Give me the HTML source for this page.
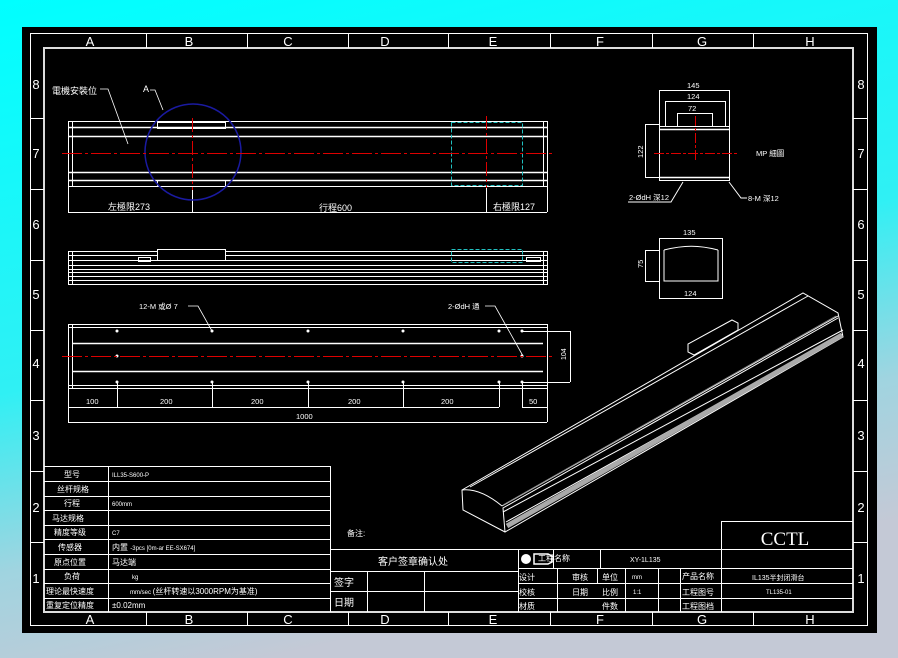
<!DOCTYPE html>
<html><head><meta charset="utf-8"><style>
html,body{margin:0;padding:0;width:898px;height:658px;overflow:hidden;}
svg{display:block;}
text{font-family:"Liberation Sans","Noto Sans CJK SC",sans-serif;fill:#fff;}
text.serif{font-family:"Liberation Serif",serif;}
</style></head><body>
<svg width="898" height="658" viewBox="0 0 898 658" xmlns="http://www.w3.org/2000/svg">
<defs>
<linearGradient id="bg" x1="0" y1="0" x2="0.3" y2="1">
<stop offset="0" stop-color="#00ffff"/><stop offset="0.55" stop-color="#30f0f4"/><stop offset="0.8" stop-color="#a0d4e0"/><stop offset="1" stop-color="#c4c9d6"/>
</linearGradient>
</defs>
<rect width="898" height="658" fill="url(#bg)"/>
<rect x="22" y="27" width="855" height="606" fill="#000"/>
<g fill="none" stroke="#fff" stroke-width="1">
<rect x="30.5" y="33.5" width="837" height="592"/>
<rect x="44" y="48" width="809" height="564" stroke="#ddd" stroke-width="2"/>
<path d="M146.5 33v15M247.5 33v15M348.5 33v15M448.5 33v15M550.5 33v15M652.5 33v15M753.5 33v15"/>
<path d="M146.5 612v14M247.5 612v14M348.5 612v14M448.5 612v14M550.5 612v14M652.5 612v14M753.5 612v14"/>
<path d="M30 118.5h14M30 189.5h14M30 260.5h14M30 330.5h14M30 400.5h14M30 471.5h14M30 542.5h14"/>
<path d="M853 118.5h15M853 189.5h15M853 260.5h15M853 330.5h15M853 400.5h15M853 471.5h15M853 542.5h15"/>
</g>
<g font-size="13" text-anchor="middle">
<text x="90" y="46">A</text><text x="189" y="46">B</text><text x="288" y="46">C</text><text x="385" y="46">D</text><text x="493" y="46">E</text><text x="600" y="46">F</text><text x="702" y="46">G</text><text x="810" y="46">H</text>
<text x="90" y="624">A</text><text x="189" y="624">B</text><text x="288" y="624">C</text><text x="385" y="624">D</text><text x="493" y="624">E</text><text x="600" y="624">F</text><text x="702" y="624">G</text><text x="810" y="624">H</text>
<text x="36" y="89">8</text><text x="36" y="158">7</text><text x="36" y="229">6</text><text x="36" y="299">5</text><text x="36" y="368">4</text><text x="36" y="440">3</text><text x="36" y="512">2</text><text x="36" y="583">1</text>
<text x="861" y="89">8</text><text x="861" y="158">7</text><text x="861" y="229">6</text><text x="861" y="299">5</text><text x="861" y="368">4</text><text x="861" y="440">3</text><text x="861" y="512">2</text><text x="861" y="583">1</text>
</g>

<!-- TOP VIEW -->
<g fill="none" stroke="#fff" stroke-width="1">
<rect x="68.5" y="121.5" width="479" height="65"/>
<path d="M72.5 121v65M543.5 121v65"/>
<path d="M68 127.5h479M68 136.5h479M68 172.5h479M68 180.5h479" stroke-width="1.5"/>
<rect x="157.5" y="122.5" width="68" height="6"/><rect x="157.5" y="180.5" width="68" height="6"/>
<path d="M68.5 186v26M192.5 186v26M486.5 186v26M547.5 186v26M68 212.5h479"/>
<path d="M100 89l8 0 20 55" stroke-width="0.8"/>
<path d="M150 90l5 0 8 20" stroke-width="0.8"/>
</g>
<circle cx="193" cy="152" r="48" fill="none" stroke="#1a1aa0" stroke-width="1.5"/>
<rect x="451.5" y="122.5" width="71" height="63" fill="none" stroke="#20c0c0" stroke-dasharray="4,2"/>
<g stroke="#d00" stroke-width="1"><path d="M62 153.5h490" stroke-dasharray="20,3,3,3"/><path d="M192.5 118v72M486.5 116v72" stroke-dasharray="14,3,3,3"/></g>
<g font-size="9">
<text x="52" y="94">電機安裝位</text><text x="143" y="92">A</text>
<text x="108" y="210">左極限273</text><text x="319" y="211">行程600</text><text x="493" y="210">右極限127</text>
</g>

<!-- SIDE VIEW -->
<g fill="none" stroke="#fff" stroke-width="1">
<rect x="68.5" y="251.5" width="479" height="33"/>
<path d="M72.5 251v33M543.5 251v33"/>
<path d="M68 255.5h479M68 260.5h479M68 265.5h479M68 269.5h479M68 272.5h479M68 276.5h479M68 280.5h479"/>
<rect x="157.5" y="249.5" width="68" height="11" fill="#000"/>
<rect x="138.5" y="257.5" width="12" height="4"/><rect x="526.5" y="257.5" width="14" height="4"/>
</g>
<rect x="451.5" y="249.5" width="71" height="13" fill="none" stroke="#20c0c0" stroke-dasharray="4,2"/>

<!-- BOTTOM VIEW -->
<g fill="none" stroke="#fff" stroke-width="1">
<rect x="68.5" y="324.5" width="479" height="64"/>
<path d="M72.5 324v64M68 327.5h479M68 385.5h479"/>
<path d="M72 343.5h471M72 371.5h471" stroke-width="1.5"/>
<path d="M117.5 382v25M212.5 382v25M308.5 382v25M403.5 382v25M499.5 382v25M522.5 382v25M68.5 388v34M547.5 388v34"/>
<path d="M68 407.5h431M522 407.5h25M68 422.5h479"/>
<path d="M522 331.5h48M522 382.5h48M570.5 331v51"/>
<path d="M188 306h10l14 25" stroke-width="0.8"/><path d="M485 306h10l28 50" stroke-width="0.8"/>
</g>
<g fill="#fff"><circle cx="117" cy="331" r="1.5"/><circle cx="212" cy="331" r="1.5"/><circle cx="308" cy="331" r="1.5"/><circle cx="403" cy="331" r="1.5"/><circle cx="499" cy="331" r="1.5"/><circle cx="522" cy="331" r="1.5"/>
<circle cx="117" cy="382" r="1.5"/><circle cx="212" cy="382" r="1.5"/><circle cx="308" cy="382" r="1.5"/><circle cx="403" cy="382" r="1.5"/><circle cx="499" cy="382" r="1.5"/><circle cx="522" cy="382" r="1.5"/>
<circle cx="117" cy="356" r="1.5"/><circle cx="522" cy="356" r="1.5"/></g>
<path d="M62 356.5h490" stroke="#d00" stroke-dasharray="20,3,3,3"/>
<g font-size="7.5">
<text x="139" y="309">12-M 或Ø 7</text><text x="448" y="309">2-ØdH 通</text>
<text x="86" y="404">100</text><text x="160" y="404">200</text><text x="251" y="404">200</text><text x="348" y="404">200</text><text x="441" y="404">200</text><text x="529" y="404">50</text>
<text x="296" y="419">1000</text>
<text x="566" y="360" transform="rotate(-90 566 360)" font-size="7">104</text>
</g>

<!-- RIGHT END VIEW -->
<g fill="none" stroke="#fff" stroke-width="1">
<rect x="659.5" y="126.5" width="70" height="54"/>
<path d="M659 129.5h70M659 177.5h70" stroke-width="1.5"/>
<path d="M659.5 90v36M729.5 90v36M659 90.5h70M665.5 101v25M725.5 101v25M665 101.5h60M677.5 113v13M712.5 113v13M677 113.5h35"/>
<path d="M645 124.5h14M645 177.5h14M645.5 124v54"/>
<path d="M628 202h43l12-20M729 182l12 16h6"/>
<path d="M659.5 238.5h63v60h-63z"/>
<path d="M664 250c20-5 35-5 54 0M664 250v31h54v-31M645 250.5h15M645 281.5h15M645.5 250v32"/>
</g>
<path d="M654 153.5h83M695.5 116v45" stroke="#d00" stroke-dasharray="10,2,3,2"/>
<g font-size="7.5">
<text x="687" y="88">145</text><text x="687" y="99">124</text><text x="688" y="111">72</text>
<text x="641" y="160" transform="rotate(-90 641 158)">122</text>
<text x="629" y="200">2-ØdH 深12</text><text x="748" y="201">8-M 深12</text><text x="756" y="156">MP 細圖</text>
<text x="683" y="235">135</text><text x="684" y="296">124</text><text x="641" y="270" transform="rotate(-90 641 268)">75</text>
</g>

<!-- 3D VIEW -->
<g fill="none" stroke="#fff" stroke-width="1">
<path d="M462 490L803 293L838 313L843 337L505 532L463 510Z"/>
<path d="M470 487L808 296M502 506L838 316M505 532L503 508L838 318"/>
<path d="M462 490Q480 488 502 506M503 512L843 330M506 522L843 334"/>
<path d="M688 352v-8l44-24l6 3v7l-44 25z"/>
</g>
<path d="M507 526L842 335" stroke="#aaa" stroke-width="5"/>
<path d="M503 505L836 316" stroke="#888" stroke-width="1"/>

<!-- LEFT TABLE -->
<g fill="none" stroke="#fff" stroke-width="1">
<path d="M44 466.5h286M330.5 466v146M108.5 466v146"/>
<path d="M44 481.5h286M44 496.5h286M44 510.5h286M44 525.5h286M44 539.5h286M44 554.5h286M44 569.5h286M44 583.5h286M44 598.5h286"/>
<path d="M330 549.5h188M330 571.5h188M330 591.5h188M367.5 571v41M424.5 571v41M518.5 549v63"/>
<path d="M518 549.5h335M518 568.5h335M518 583.5h335M518 598.5h335M721.5 521v91M721 521.5h132"/>
<path d="M553.5 549v19M600.5 549v19M557.5 568v44M597.5 568v15M625.5 568v44M658.5 568v44M680.5 568v44"/>
</g>
<g font-size="8">
<text x="64" y="477">型号</text><text x="57" y="492">丝杆规格</text><text x="64" y="506">行程</text><text x="52" y="521">马达规格</text><text x="54" y="535">精度等级</text><text x="58" y="550">传感器</text><text x="54" y="565">原点位置</text><text x="64" y="579">负荷</text><text x="46" y="594">理论最快速度</text><text x="46" y="608">重复定位精度</text>
<text x="112" y="477" font-size="6">ILL35-S600-P</text><text x="112" y="506" font-size="6">600mm</text><text x="112" y="535" font-size="6">C7</text>
<text x="112" y="550">内置 <tspan font-size="6">-3pcs [0m-ar EE-SX674]</tspan></text>
<text x="112" y="565">马达端</text><text x="132" y="579" font-size="6">kg</text>
<text x="130" y="594"><tspan font-size="6">mm/sec </tspan>(丝杆转速以3000RPM为基准)</text>
<text x="112" y="608">±0.02mm</text>
<text x="347" y="536">备注:</text>
<text x="378" y="565" font-size="10">客户签章确认处</text>
<text x="334" y="586" font-size="10">签字</text><text x="334" y="606" font-size="10">日期</text>
<text x="538" y="561">工程名称</text><text x="630" y="562" font-size="7">XY-1L135</text>
<text x="519" y="580">设计</text><text x="572" y="580">审核</text><text x="602" y="580">单位</text><text x="632" y="579" font-size="6">mm</text><text x="682" y="579">产品名称</text><text x="752" y="580" font-size="7">IL135半封闭滑台</text>
<text x="519" y="595">校核</text><text x="572" y="595">日期</text><text x="602" y="595">比例</text><text x="633" y="594" font-size="6">1:1</text><text x="682" y="595">工程图号</text><text x="766" y="594" font-size="6">TL135-01</text>
<text x="519" y="609">材质</text><text x="602" y="609">件数</text><text x="682" y="609">工程图档</text>
</g>
<text class="serif" x="785" y="545" font-size="19" text-anchor="middle">CCTL</text>
<circle cx="526" cy="559" r="5" fill="#fff"/>
<path d="M534 554h14l4 2v6l-4 2h-14z" fill="none" stroke="#fff" stroke-width="1.5"/>
</svg>
</body></html>
